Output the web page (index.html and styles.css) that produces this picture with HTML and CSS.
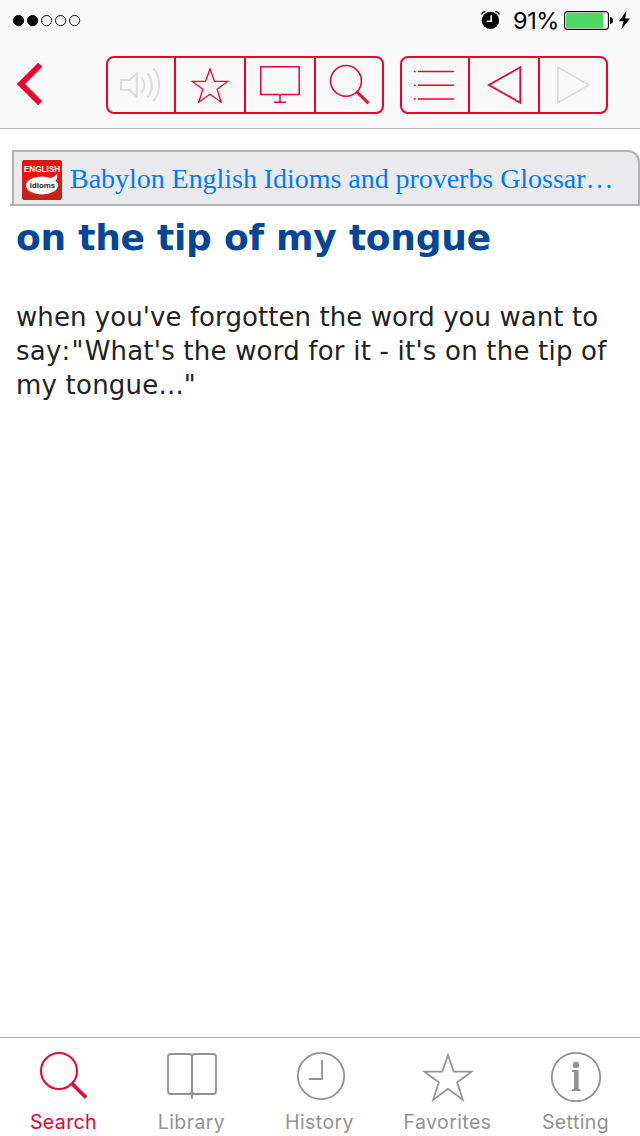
FILE: index.html
```html
<!DOCTYPE html>
<html lang="en">
<head>
    <meta charset="UTF-8">
    <title>on the tip of my tongue</title>
    <link rel="stylesheet" href="styles.css">
</head>
<body>
    <div class="app">
        <header class="header">
            <div class="statusBar">
                <svg class="signal" width="70" height="14" viewBox="0 0 70 14">
                    <circle cx="6.6" cy="7.6" r="5.1" fill="#000"/>
                    <circle cx="20.6" cy="7.6" r="5.1" fill="#000"/>
                    <circle cx="34.6" cy="7.6" r="5.1"/>
                    <circle cx="48.6" cy="7.6" r="5.1"/>
                    <circle cx="62.6" cy="7.6" r="5.1"/>
                </svg>
                <div class="statusRight">
                    <svg class="alarm" width="20" height="20" viewBox="0 0 20 20">
                        <circle cx="10.4" cy="10.4" r="8.7" fill="#000"/>
                        <path d="M1.4 4.5C2.2 2.8 3.6 1.9 5.4 1.6M15.4 1.6C17.2 1.9 18.6 2.8 19.4 4.5" stroke="#000" stroke-width="1.5" fill="none"/>
                        <path d="M11.2 5.2V11.2H6.9" stroke="#fff" stroke-width="1.5" fill="none"/>
                    </svg>
                    <span class="percent">91%</span>
                    <svg class="battery" width="68" height="20" viewBox="0 0 68 20">
                        <rect x="0.6" y="1.6" width="43.8" height="17.8" rx="3" fill="#fff" stroke="#000" stroke-width="1.1"/>
                        <rect x="2" y="3" width="37.4" height="15" rx="1" fill="#4cd964"/>
                        <path d="M46 7C48.4 7.5 49 9 49 10.5C49 12 48.4 13.5 46 14Z"/>
                        <path d="M62.5 0.8L55 11.3H59.6L57.3 19.5L66 8.6H61.2Z"/>
                    </svg>
                </div>
            </div>
            <nav class="toolbar">
                <svg class="back" width="28" height="44" viewBox="0 0 28 44">
                    <path d="M25.2 2.8L6 22L25.2 41.2"/>
                </svg>
                <div class="group groupMain">
                    <div class="cell disabled">
                        <svg width="66" height="54" viewBox="0 0 66 54" stroke-width="2">
                            <path d="M13 22H21.5L28.8 15.5V38.5L21.5 32H13Z"/>
                            <path d="M33.3 19.3C37.3 24 37.3 30 33.3 34.7M39.3 15C45.2 22 45.2 32.5 39.3 39.5M45.3 10.5C53.2 20 53.2 34 45.3 43.5"/>
                        </svg>
                    </div>
                    <div class="cell">
                        <svg width="68" height="54" viewBox="0 0 68 54" stroke-width="1.3">
                            <path d="M34 11L38.5 23.4H51.7L41.1 31.3L45.2 44.2L34 36.2L22.8 44.2L26.9 31.3L16.3 23.4H29.5Z"/>
                        </svg>
                    </div>
                    <div class="cell">
                        <svg width="68" height="54" viewBox="0 0 68 54" stroke-width="1.5">
                            <path d="M14.8 8.8H53.2V36.4H14.8ZM34 36.4V44.2M28 44.2H40"/>
                        </svg>
                    </div>
                    <div class="cell">
                        <svg width="66" height="54" viewBox="0 0 66 54" stroke-width="1.6">
                            <circle cx="30" cy="22.9" r="15.4"/>
                            <path d="M40.8 33.8L52.4 45.3" stroke-width="3"/>
                        </svg>
                    </div>
                </div>
                <div class="group">
                    <div class="cell">
                        <svg width="66" height="54" viewBox="0 0 66 54" stroke-width="1.5">
                            <path d="M12 13.6H13.7M16 13.6H52M12 27.3H13.7M16 27.3H52M12 41.1H13.7M16 41.1H52"/>
                        </svg>
                    </div>
                    <div class="cell">
                        <svg width="68" height="54" viewBox="0 0 68 54" stroke-width="1.7">
                            <path d="M18.8 27L50.2 9.3V44.7Z"/>
                        </svg>
                    </div>
                    <div class="cell disabled">
                        <svg width="66" height="54" viewBox="0 0 66 54" stroke-width="1.7">
                            <path d="M49 27L17.9 9.3V44.7Z"/>
                        </svg>
                    </div>
                </div>
            </nav>
        </header>

        <main class="content">
            <div class="source">
                <div class="sourceTab">
                    <svg class="logo" width="40" height="40" viewBox="0 0 40 40">
                        <defs>
                            <linearGradient id="logoRed" x1="0" y1="0" x2="0" y2="1">
                                <stop offset="0" stop-color="#d91710"/>
                                <stop offset="0.3" stop-color="#f0140a"/>
                                <stop offset="0.65" stop-color="#cb211b"/>
                                <stop offset="1" stop-color="#c4221c"/>
                            </linearGradient>
                        </defs>
                        <rect width="40" height="40" rx="2" fill="url(#logoRed)"/>
                        <path d="M28 18C32 17 34 15.5 35 13.5C35.6 17 35.3 19 34 20.5Z" fill="#fff"/>
                        <ellipse cx="20" cy="25.4" rx="16" ry="9" fill="#fff"/>
                        <text x="1.8" y="12.3" textLength="36.4" lengthAdjust="spacingAndGlyphs" font-size="8.3" fill="#fff">ENGLISH</text>
                        <text x="7.8" y="27.9" textLength="25.4" lengthAdjust="spacingAndGlyphs" font-size="7.8" fill="#222">idioms</text>
                    </svg>
                    <span class="sourceName">Babylon English Idioms and proverbs Glossar…</span>
                </div>
            </div>
            <article class="entry">
                <h1>on the tip of my tongue</h1>
                <p>when you've forgotten the word you want to<br><span class="example">say<span class="mark">:"</span>What's the word for it - it's on the tip of<br>my tongue..."</span></p>
            </article>
        </main>

        <footer class="tabBar">
            <div class="tab active">
                <svg width="56" height="56" viewBox="0 0 56 56" stroke-width="2">
                    <circle cx="23" cy="25" r="18"/>
                    <path d="M35.6 37.2L50 51.6" stroke-width="3.6"/>
                </svg>
                <span>Search</span>
            </div>
            <div class="tab">
                <svg width="56" height="56" viewBox="0 0 56 56" stroke-width="1.8">
                    <rect x="4" y="8" width="24" height="40" rx="3"/>
                    <rect x="28" y="8" width="24" height="40" rx="3"/>
                    <path d="M28 45V53"/>
                    <circle cx="28" cy="48" r="1"/>
                </svg>
                <span>Library</span>
            </div>
            <div class="tab">
                <svg width="56" height="56" viewBox="0 0 56 56" stroke-width="1.8">
                    <circle cx="29" cy="30" r="23.2"/>
                    <path d="M30 14V33H17"/>
                </svg>
                <span>History</span>
            </div>
            <div class="tab">
                <svg width="56" height="56" viewBox="0 0 56 56" stroke-width="1.7">
                    <path d="M28 9L33.6 25.6H51.5L37.1 36.2L42.9 54L28 42.8L13.1 54L18.9 36.2L4.5 25.6H22.4Z"/>
                </svg>
                <span>Favorites</span>
            </div>
            <div class="tab">
                <svg width="56" height="56" viewBox="0 0 56 56" stroke-width="1.8">
                    <circle cx="28" cy="31" r="24.2"/>
                    <circle cx="28" cy="19" r="3.2" fill="#929292" stroke="none"/>
                    <path d="M24 24H30.6V42.9H32.3V45H24V42.9H26V26H24Z" fill="#929292" stroke="none"/>
                </svg>
                <span>Setting</span>
            </div>
        </footer>
    </div>
</body>
</html>
```
FILE: styles.css
```css
body {
    margin: 0;
    background: #fff;
    font-family: Inter, "Liberation Sans", sans-serif;
}
svg {
    display: block;
    flex: none;
}
.app {
    display: flex;
    flex-direction: column;
    height: 1136px;
    width: 640px;
    overflow: hidden;
}
.header {
    background: #f9f9f9;
    border-bottom: 1px solid #b2b2b2;
    height: 128px;
}
.statusBar {
    display: flex;
    justify-content: space-between;
    height: 40px;
    padding: 0 8px 0 12px;
}
.signal {
    margin-top: 13px;
    fill: none;
    stroke: #000;
    stroke-width: 1;
}
.statusRight {
    display: flex;
    align-items: flex-start;
}
.alarm {
    margin-top: 10px;
}
.percent {
    font-size: 23.5px;
    line-height: 40px;
    width: 45px;
    margin: 1px 6px 0 13px;
    letter-spacing: -0.4px;
    white-space: nowrap;
}
.battery {
    margin-top: 10px;
}
.toolbar {
    display: flex;
    align-items: center;
    height: 58px;
    padding: 16px 32px 0 15px;
}
.back {
    margin-top: -2px;
    fill: none;
    stroke: #ef002f;
    stroke-width: 5.8;
}
.group {
    display: flex;
    border: 2px solid #ef002f;
    border-radius: 8px;
}
.groupMain {
    margin-left: 63px;
    margin-right: 16px;
}
.cell {
    fill: none;
    stroke: #ef002f;
}
.cell + .cell {
    border-left: 2px solid #ef002f;
}
.cell.disabled {
    stroke: #dcdcdc;
}
.content {
    flex: 1;
    padding-top: 21px;
}
.source {
    margin-left: 10px;
    padding-left: 2px;
    border-bottom: 2px solid #b2b2b2;
}
.sourceTab {
    display: flex;
    align-items: center;
    height: 52px;
    padding: 0 8px;
    background: #eaeaec;
    border: 2px solid #b2b2b2;
    border-bottom: none;
    border-top-right-radius: 12px;
}
.logo {
    margin-top: 4px;
    font-family: "Liberation Sans", Arial, sans-serif;
    font-weight: bold;
}
.sourceName {
    margin-top: 2px;
    margin-left: 8px;
    font-family: "Liberation Serif", "Times New Roman", serif;
    font-size: 28px;
    letter-spacing: -0.04px;
    color: #007aff;
    white-space: nowrap;
}
.entry {
    padding: 0 16px;
    font-family: Verdana, "DejaVu Sans", sans-serif;
}
.entry h1 {
    margin: 10px 0 0;
    font-size: 36px;
    line-height: 44px;
    letter-spacing: -0.24px;
    color: #054696;
    white-space: nowrap;
}
.entry p {
    margin: 40px 0 0;
    font-size: 26px;
    line-height: 34px;
    letter-spacing: 0.07px;
    color: #222;
    white-space: nowrap;
}
.example {
    letter-spacing: 0.21px;
}
.mark {
    letter-spacing: 1.2px;
}
.tabBar {
    display: flex;
    height: 98px;
    border-top: 1px solid #b2b2b2;
}
.tab {
    flex: 1;
    display: flex;
    flex-direction: column;
    align-items: center;
    padding-top: 8px;
    color: #929292;
    fill: none;
    stroke: #929292;
    font-size: 19.5px;
    line-height: 24px;
    letter-spacing: 0.4px;
}
.tab span {
    margin-top: 8px;
    margin-right: 1px;
}
.tab.active {
    color: #ef002f;
    stroke: #ef002f;
}
```
